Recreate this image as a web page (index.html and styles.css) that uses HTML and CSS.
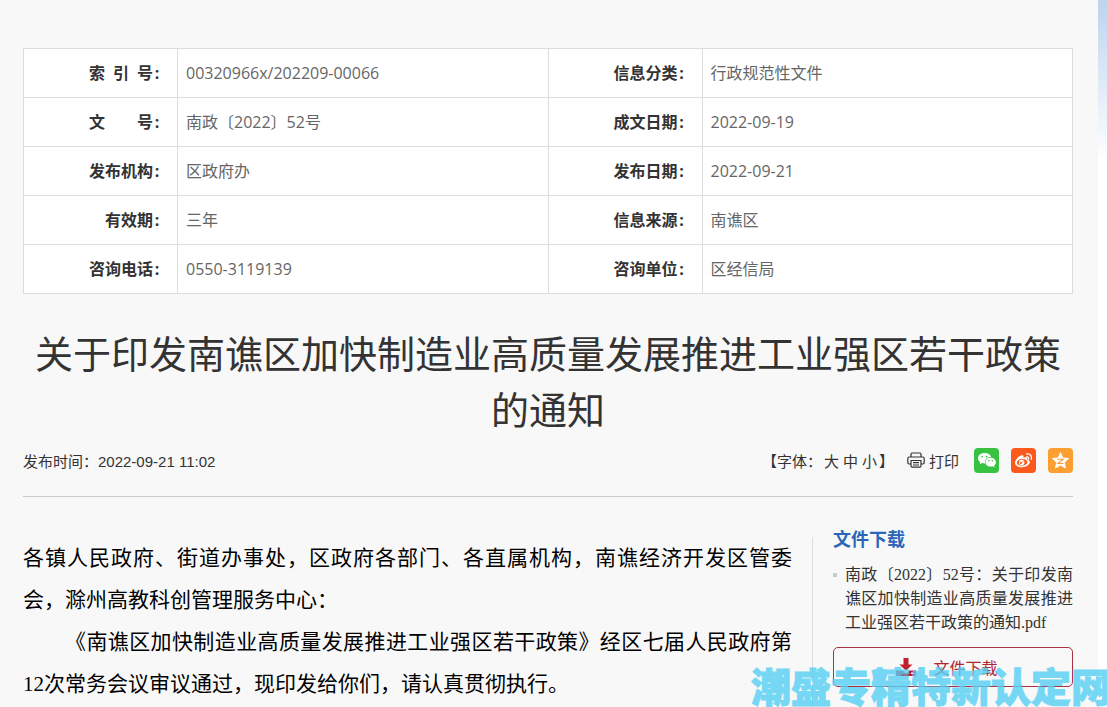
FILE: index.html
```
<!DOCTYPE html>
<html lang="zh-CN">
<head>
<meta charset="utf-8">
<title>关于印发南谯区加快制造业高质量发展推进工业强区若干政策的通知</title>
<link rel="stylesheet" href="styles.css">
</head>
<body>
<main class="page">
  <table class="info">
    <colgroup><col class="label-col"><col><col class="label-col"><col></colgroup>
    <tbody>
      <tr><th scope="row"><span class="spread"><span>索</span><span>引</span><span>号<span class="colon">:</span></span></span></th><td>00320966x/202209-00066</td><th scope="row">信息分类<span class="colon">:</span></th><td>行政规范性文件</td></tr>
      <tr><th scope="row"><span class="spread"><span>文</span><span>号<span class="colon">:</span></span></span></th><td>南政〔2022〕52号</td><th scope="row">成文日期<span class="colon">:</span></th><td>2022-09-19</td></tr>
      <tr><th scope="row">发布机构<span class="colon">:</span></th><td>区政府办</td><th scope="row">发布日期<span class="colon">:</span></th><td>2022-09-21</td></tr>
      <tr><th scope="row">有效期<span class="colon">:</span></th><td>三年</td><th scope="row">信息来源<span class="colon">:</span></th><td>南谯区</td></tr>
      <tr><th scope="row">咨询电话<span class="colon">:</span></th><td>0550-3119139</td><th scope="row">咨询单位<span class="colon">:</span></th><td>区经信局</td></tr>
    </tbody>
  </table>

  <h1 class="title">关于印发南谯区加快制造业高质量发展推进工业强区若干政策的通知</h1>

  <div class="meta">
    <span class="date">发布时间：2022-09-21 11:02</span>
    <div class="tools">
      <div class="sizes">【字体：<button type="button">大</button><button type="button">中</button><button type="button">小</button>】</div>
      <button type="button" class="print">
        <svg viewBox="0 0 18 16" width="18" height="16" fill="none" stroke="#333" stroke-width="1.2" aria-hidden="true"><path d="M4 5V2.200Q4 1 5.200 1h7.600Q14 1 14 2.200V5M4 12H2.200Q.8 12 .8 10.600V6.400Q.8 5 2.200 5h13.600q1.400 0 1.400 1.400v4.200q0 1.400-1.400 1.400H14"/><path d="M4 8.500h10v5.500q0 1.200-1.200 1.200H5.200Q4 15.200 4 14zM6 10.700h6M6 13h6"/></svg>
        打印
      </button>
      <div class="share">
        <a href="#" class="wechat" aria-label="微信"><svg viewBox="0 0 25 25" width="25" height="25"><path fill="#fff" d="M10.500 5C6.700 5 4 7.300 4 10.200c0 1.700.9 3.100 2.300 4L5.700 16.300l2.400-1.200c.8.2 1.600.3 2.400.3h.6c-.9-4 2.300-6.600 6.100-6.500C16.400 6.500 13.800 5 10.500 5z"/><path fill="#fff" d="M16.600 9.800c-3 0-5.200 2-5.200 4.400s2.200 4.400 5.200 4.400c.7 0 1.300-.1 1.900-.3l2 1.100-.5-1.900c1.200-.8 1.900-2 1.900-3.300 0-2.400-2.300-4.400-5.300-4.400z"/><g fill="#37c242"><circle cx="8.300" cy="8.600" r=".9"/><circle cx="12.700" cy="8.600" r=".9"/><circle cx="14.900" cy="12.700" r=".8"/><circle cx="18.300" cy="12.700" r=".8"/></g></svg></a>
        <a href="#" class="weibo" aria-label="微博"><svg viewBox="0 0 25 25" width="25" height="25"><path fill="#fff" fill-rule="evenodd" d="M10.200 7.500c1.500-.5 2.700.1 2.200 2.200 2.300-.9 4.300-.7 3.900 1.700 1.500.4 2.500 1.300 2.500 2.700 0 2.700-3.300 5.200-7.600 5.200-4.200 0-7.200-1.900-7.200-4.600 0-2.800 3.400-6.400 6.200-7.200zM10.900 11.100c-3 .2-5.200 1.800-5 3.700s2.500 3.100 5.500 2.800 5.200-1.900 5-3.700-2.500-3-5.500-2.800z"/><circle cx="10.700" cy="14.500" r="2.700" fill="#fff"/><circle cx="9.900" cy="14.900" r="1.100" fill="#fc5a1c"/><circle cx="11.800" cy="13.800" r=".5" fill="#fc5a1c"/><path d="M15.500 8.900c1.500-.3 2.500.8 2 2.200M15.700 6c3.500-.6 5.600 2.100 4.500 5.400" fill="none" stroke="#fff" stroke-width="1.300" stroke-linecap="round"/></svg></a>
        <a href="#" class="qzone" aria-label="QQ空间"><svg viewBox="0 0 25 25" width="25" height="25"><path fill="#fff" stroke="#fff" stroke-linejoin="round" d="M12.500 4.700l2.300 5.200 5.700.6-4.200 3.900 1.200 5.600-5-2.900-5 2.900 1.200-5.600-4.200-3.900 5.700-.6z"/><path d="M9.300 11.300h5.900l-5.300 4.200h5.700" fill="none" stroke="#fc9f32" stroke-width="1.100"/></svg></a>
      </div>
    </div>
  </div>

  <div class="content">
    <article class="article">
      <p>各镇人民政府、街道办事处，区政府各部门、各直属机构，南谯经济开发区管委会，滁州高教科创管理服务中心：</p>
      <p class="indent">《南谯区加快制造业高质量发展推进工业强区若干政策》经区七届人民政府第12次常务会议审议通过，现印发给你们，请认真贯彻执行。</p>
    </article>
    <aside class="side">
      <h2>文件下载</h2>
      <ul><li><a href="#">南政〔2022〕52号：关于印发南谯区加快制造业高质量发展推进工业强区若干政策的通知.pdf</a></li></ul>
      <a href="#" class="download">
        <svg viewBox="0 0 20 18" width="20" height="18" aria-hidden="true"><path fill="#c0202e" d="M7.500 0h5v6.500h4L10 12.700 3.500 6.500h4z"/><path fill="#c0202e" fill-rule="evenodd" d="M0 12.500h6.500L10 15.500l3.500-3H20V18H0zM15 14.500v1.500h2.500v-1.500z"/></svg>
        文件下载
      </a>
    </aside>
  </div>
</main>
<div class="watermark">潮盛专精特新认定网</div>
</body>
</html>
```
FILE: styles.css
```
* { box-sizing: border-box; }
html, body { margin: 0; }
body {
  height: 100vh;
  overflow: hidden;
  position: relative;
  padding-right: 9px;
  background: linear-gradient(#bdd3ef, #fff 160px);
  color: #333;
  font-family: "Liberation Sans", "Noto Sans CJK SC", sans-serif;
  font-size: 16px;
}
.page {
  min-height: 100vh;
  padding: 48px 25px 0 23px;
  background: #f8f8f8;
}
button {
  padding: 0;
  border: 0;
  background: none;
  color: inherit;
  font: inherit;
  cursor: pointer;
}
a { color: inherit; text-decoration: none; }

/* Document index */
.info {
  width: 100%;
  border-collapse: collapse;
  table-layout: fixed;
  background: #fff;
  font-family: "Open Sans", "Noto Sans CJK SC", sans-serif;
  line-height: 24px;
}
.label-col { width: 154px; }
.info th, .info td { height: 49px; padding: 0 8px; border: 1px solid #ddd; }
.info th { padding-right: 16px; text-align: right; }
.info td { color: #666; }
.spread { display: inline-flex; width: 72px; justify-content: space-between; }
.colon { display: inline-block; width: 8px; text-align: center; }

.title {
  margin: 33px 0 0;
  font-size: 38px;
  font-weight: 400;
  line-height: 56px;
  text-align: center;
}

/* Date and page tools */
.meta {
  display: flex;
  align-items: center;
  justify-content: space-between;
  height: 58px;
  padding-bottom: 15px;
  border-bottom: 1px solid #ccc;
  font-size: 15px;
}
.tools, .sizes, .print, .share { display: flex; align-items: center; }
.sizes button { padding: 0 2px; }
.print { gap: 4px; margin-left: 13px; }
.share { gap: 12px; margin-left: 15px; }
.share a { display: block; width: 25px; height: 25px; border-radius: 4px; }
.share svg { display: block; }
.wechat { background: #37c242; }
.weibo { background: #fc5a1c; }
.qzone { background: #fc9f32; }

/* Article and side column */
.content { display: flex; gap: 20px; padding-top: 40px; }
.article {
  flex: 1;
  color: #000;
  font-family: "Liberation Serif", "Noto Sans CJK SC", serif;
  font-size: 21px;
  line-height: 42px;
  text-align: justify;
}
.article p { margin: 0; }
.article .indent { text-indent: 2em; }
.side {
  width: 261px;
  min-height: 200px;
  padding-left: 20px;
  border-left: 1px solid #ddd;
}
.side h2 {
  margin: -9px 0 0;
  color: #2b66b8;
  font-size: 18px;
  line-height: 24px;
}
.side ul {
  margin: 0;
  padding: 11px 0 0;
  list-style: none;
  font-family: "Liberation Serif", "Noto Sans CJK SC", serif;
  line-height: 24px;
  text-align: justify;
}
.side li { display: flex; gap: 8px; }
.side li::before { content: ""; flex: none; width: 4px; height: 4px; margin-top: 10px; background: #ccc; }
.download {
  display: flex;
  align-items: center;
  justify-content: center;
  gap: 17px;
  height: 40px;
  padding-right: 12px;
  margin-top: 12px;
  border: 1px solid #a83240;
  border-radius: 5px;
  color: #b02634;
}

.watermark {
  position: absolute;
  right: -4px;
  bottom: -9px;
  color: #55d0f4;
  opacity: 0.8;
  font-size: 40px;
  font-weight: 900;
  line-height: 56px;
  white-space: nowrap;
  -webkit-text-stroke: 1px #55d0f4;
}
```
